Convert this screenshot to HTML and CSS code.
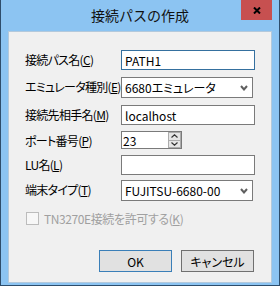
FILE: index.html
```html
<!DOCTYPE html>
<html lang="ja">
<head>
  <meta charset="UTF-8" />
  <title>接続パスの作成</title>
  <link rel="stylesheet" href="styles.css">
</head>
<body>
  <div class="window">
    <div class="titlebar">
      <span></span>
      <div class="title">接続パスの作成</div>
      <div class="close">
        <svg width="8" height="7" viewBox="0 0 8 7">
          <path d="M1 0.5 L7 6.5 M7 0.5 L1 6.5" stroke="#000" stroke-width="2" fill="none"/>
        </svg>
      </div>
    </div>

    <div class="client">
      <div class="form">
        <label>接続パス名(<u>C</u>)</label>
        <input class="field focus" type="text" value="PATH1">

        <label>エミュレータ種別(<u>E</u>)</label>
        <div class="combo">
          <span>6680エミュレータ</span>
          <svg width="8" height="6" viewBox="0 0 8 6"><path d="M1 1 L4 4.5 L7 1" stroke="#5f5f5f" stroke-width="2" fill="none"/></svg>
        </div>

        <label>接続先相手名(<u>M</u>)</label>
        <input class="field" type="text" value="localhost">

        <label>ポート番号(<u>P</u>)</label>
        <div class="spin">
          <input type="text" value="23">
          <div class="updown">
            <div class="arrow"><svg width="7" height="4" viewBox="0 0 7 4"><path d="M0.5 3.5 L3.5 0.8 L6.5 3.5" stroke="#333" stroke-width="1.2" fill="none"/></svg></div>
            <div class="arrow"><svg width="7" height="4" viewBox="0 0 7 4"><path d="M0.5 0.5 L3.5 3.2 L6.5 0.5" stroke="#333" stroke-width="1.2" fill="none"/></svg></div>
          </div>
        </div>

        <label>LU名(<u>L</u>)</label>
        <input class="field" type="text" value="">

        <label>端末タイプ(<u>T</u>)</label>
        <div class="combo">
          <span>FUJITSU-6680-00</span>
          <svg width="8" height="6" viewBox="0 0 8 6"><path d="M1 1 L4 4.5 L7 1" stroke="#5f5f5f" stroke-width="2" fill="none"/></svg>
        </div>
      </div>

      <div class="check">
        <span class="box"></span>
        <span class="check-text">TN3270E接続を許可する(<u>K</u>)</span>
      </div>

      <div class="buttons">
        <button class="default">OK</button>
        <button>キャンセル</button>
      </div>
    </div>
  </div>
</body>
</html>
```

FILE: styles.css
```css
body {
  margin: 0;
  font-family: "Noto Sans CJK JP", "Liberation Sans", sans-serif;
  font-size: 12px;
  font-feature-settings: "palt";
  color: #000;
}

.window {
  width: 280px;
  height: 286px;
  box-sizing: border-box;
  background-color: #8cc4f2;
  border: 1px solid #2e4d6b;
  border-top: none;
  padding: 0 7px 2px;
}

.titlebar {
  height: 31px;
  display: grid;
  grid-template-columns: 1fr auto 1fr;
  align-items: center;
}

.title {
  font-size: 14px;
  line-height: 20px;
  color: #111;
  padding-bottom: 1px;
  font-feature-settings: normal;
}

.close {
  justify-self: end;
  align-self: start;
  width: 31px;
  height: 20px;
  background-color: #c75050;
  display: flex;
  align-items: center;
  justify-content: center;
}

.client {
  height: 252px;
  box-sizing: border-box;
  background-color: #f0f0f0;
  border: 1px solid #b3c9dc;
  padding: 18px 0 0 16px;
}

.form {
  display: grid;
  grid-template-columns: 96px 134px;
  grid-template-rows: 27px 28px 26px 24px 25px 21px;
  align-items: start;
}

.form label {
  line-height: 20px;
  white-space: nowrap;
  letter-spacing: -0.7px;
}

.field {
  width: 134px;
  height: 20px;
  box-sizing: border-box;
  border: 1px solid #7a7a7a;
  padding: 0 3px;
  margin: 0;
  font-family: inherit;
  font-size: 12px;
  font-feature-settings: inherit;
  background: #fff;
  outline: none;
}

.field.focus {
  border-color: #35709f;
}

.combo {
  width: 132px;
  height: 21px;
  box-sizing: border-box;
  border: 1px solid #7a7a7a;
  background: #fff;
  display: flex;
  align-items: center;
  justify-content: space-between;
  padding: 0 4px 0 3px;
}

.spin {
  width: 61px;
  height: 18px;
  box-sizing: border-box;
  border: 1px solid #7a7a7a;
  background: #fff;
  display: flex;
}

.spin input {
  width: 44px;
  border: none;
  padding: 0 1px;
  margin: 0;
  font-family: inherit;
  font-size: 12px;
  outline: none;
  background: transparent;
}

.updown {
  width: 16px;
  display: flex;
  flex-direction: column;
}

.arrow {
  flex: 1;
  border: 1px solid #acacac;
  background: #e6e6e6;
  display: flex;
  align-items: center;
  justify-content: center;
}

.arrow + .arrow {
  border-top: none;
}

.check {
  display: flex;
  align-items: center;
  gap: 5px;
  margin: 11px 0 0 1px;
  height: 13px;
  color: #a0a0a0;
  white-space: nowrap;
}

.check-text {
  letter-spacing: -0.4px;
}

.box {
  width: 13px;
  height: 13px;
  box-sizing: border-box;
  border: 1px solid #bcbcbc;
  background: #f7f7f7;
}

.buttons {
  display: flex;
  gap: 9px;
  margin: 25px 0 0 74px;
}

button {
  width: 73px;
  height: 22px;
  border: 1px solid #707070;
  background-color: #e1e1e1;
  font-family: inherit;
  font-size: 12px;
  font-feature-settings: inherit;
  padding: 0;
  color: #000;
}

button.default {
  border-color: #3a7fb8;
}
```
